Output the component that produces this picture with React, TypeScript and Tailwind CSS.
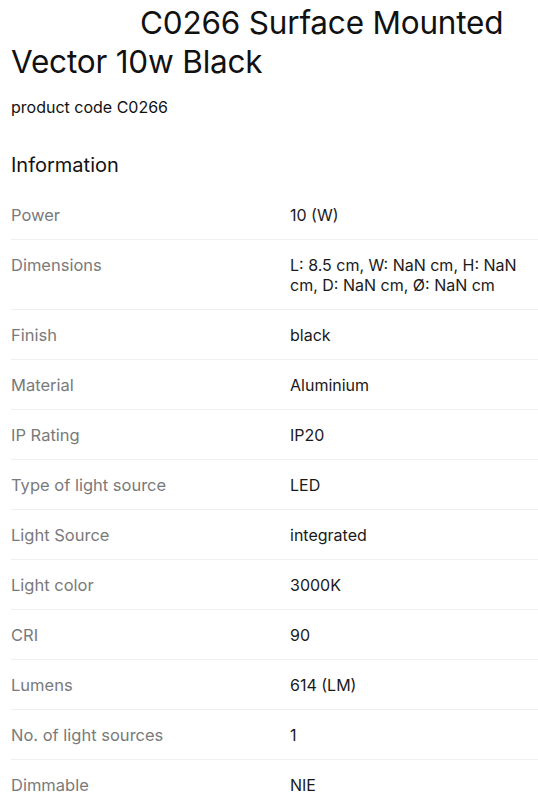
import React from 'react';

const specs: { label: string; value: string }[] = [
  { label: 'Power', value: '10 (W)' },
  { label: 'Dimensions', value: 'L: 8.5 cm, W: NaN cm, H: NaN cm, D: NaN cm, Ø: NaN cm' },
  { label: 'Finish', value: 'black' },
  { label: 'Material', value: 'Aluminium' },
  { label: 'IP Rating', value: 'IP20' },
  { label: 'Type of light source', value: 'LED' },
  { label: 'Light Source', value: 'integrated' },
  { label: 'Light color', value: '3000K' },
  { label: 'CRI', value: '90' },
  { label: 'Lumens', value: '614 (LM)' },
  { label: 'No. of light sources', value: '1' },
  { label: 'Dimmable', value: 'NIE' },
];

const App = () => {
  return (
    <div className="bg-white min-h-screen pl-[11px] font-['Inter','Noto_Sans',sans-serif] text-[#111]">
      <h1 className="pt-[3px] pr-[11px] text-[31.5px] leading-[39px] font-normal indent-[129px] tracking-[-0.2px]">
        C0266 Surface Mounted Vector 10w Black
      </h1>
      <p className="mt-[14px] text-[16px] leading-[24px]">product code C0266</p>

      <h2 className="mt-[32px] text-[20px] leading-[28px]">Information</h2>

      <div className="mt-[11px]">
        {specs.map((s) => (
          <div
            key={s.label}
            className="grid grid-cols-[279px_1fr] pt-[15px] pb-[14px] border-b border-[#efefef] text-[16px] leading-[20px]"
          >
            <div className="text-[#7a7a7a] text-[16.5px]">{s.label}</div>
            <div className="text-[#1a1a1a] pr-[8px]">{s.value}</div>
          </div>
        ))}
      </div>
    </div>
  );
};

export default App;
